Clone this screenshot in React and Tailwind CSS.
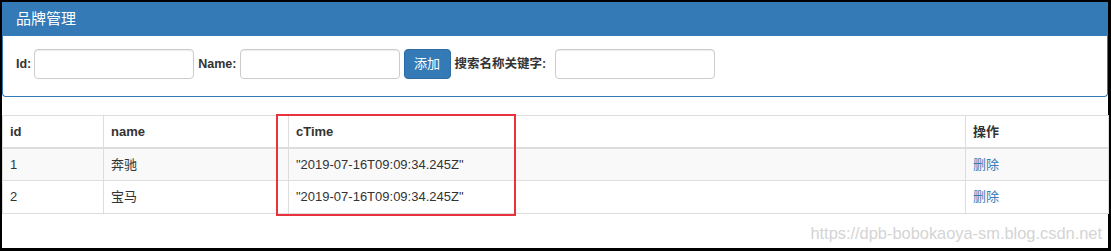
import React from 'react';

const rows = [
    { id: 1, name: '奔驰', ctime: '"2019-07-16T09:09:34.245Z"' },
    { id: 2, name: '宝马', ctime: '"2019-07-16T09:09:34.245Z"' },
];

const App = () => {
    return (
        <div className="w-[1111px] h-[251px] bg-black pt-[2px] pl-[2px] pr-[3px] pb-[3px]">
            <div className="relative h-full bg-white text-[#333] font-[Liberation_Sans,Noto_Sans_CJK_SC,sans-serif]">
                {/* Panel */}
                <div className="border border-t-0 border-[#337ab7] rounded-b-[4px]">
                    <div className="h-[34px] bg-[#337ab7] px-[13px] flex items-center text-white text-[15px]">
                        品牌管理
                    </div>
                    <div className="h-[60px] px-[13px] pt-[13px] flex items-start text-[12.5px]">
                        <label className="h-[30px] mr-[3px] flex items-center font-bold">Id:</label>
                        <input className="mr-[4px] w-[160px] h-[30px] border border-[#ccc] rounded-[4px] shadow-[inset_0_1px_1px_rgba(0,0,0,0.075)]" />
                        <label className="h-[30px] mr-[3px] flex items-center font-bold">Name:</label>
                        <input className="mr-[4px] w-[160px] h-[30px] border border-[#ccc] rounded-[4px] shadow-[inset_0_1px_1px_rgba(0,0,0,0.075)]" />
                        <button className="mr-[4px] w-[47px] h-[30px] bg-[#337ab7] border border-[#2e6da4] rounded-[4px] text-white text-[13px]">
                            添加
                        </button>
                        <label className="h-[30px] mr-[9px] flex items-center font-bold">搜索名称关键字:</label>
                        <input className="w-[160px] h-[30px] border border-[#ccc] rounded-[4px] shadow-[inset_0_1px_1px_rgba(0,0,0,0.075)]" />
                    </div>
                </div>

                {/* Table */}
                <table className="mt-[18px] w-full table-fixed border-collapse text-[13px]">
                    <colgroup>
                        <col className="w-[101px]" />
                        <col className="w-[185px]" />
                        <col className="w-[677px]" />
                        <col className="w-[143px]" />
                    </colgroup>
                    <thead>
                        <tr>
                            <th className="h-[32px] px-[7px] text-left font-bold border border-b-2 border-[#ddd]">id</th>
                            <th className="h-[32px] px-[7px] text-left font-bold border border-b-2 border-[#ddd]">name</th>
                            <th className="h-[32px] px-[7px] text-left font-bold border border-b-2 border-[#ddd]">cTime</th>
                            <th className="h-[32px] px-[7px] text-left font-bold border border-b-2 border-[#ddd]">操作</th>
                        </tr>
                    </thead>
                    <tbody>
                        {rows.map((row, i) => (
                            <tr key={row.id} className={i % 2 === 0 ? 'bg-[#f9f9f9]' : 'bg-white'}>
                                <td className="h-[33px] px-[7px] border border-[#ddd]">{row.id}</td>
                                <td className="h-[33px] px-[7px] border border-[#ddd]">{row.name}</td>
                                <td className="h-[33px] px-[7px] border border-[#ddd]">{row.ctime}</td>
                                <td className="h-[33px] px-[7px] border border-[#ddd]">
                                    <a className="text-[#337ab7]">删除</a>
                                </td>
                            </tr>
                        ))}
                    </tbody>
                </table>

                {/* annotation */}
                <div className="absolute left-[274px] top-[112px] w-[240px] h-[102px] border-2 border-[#e8323c]"></div>

                {/* watermark */}
                <div className="absolute right-[6px] top-[223px] text-[16.4px] leading-none text-[#d4d4d4]">
                    https://dpb-bobokaoya-sm.blog.csdn.net
                </div>
            </div>
        </div>
    );
};

export default App;
